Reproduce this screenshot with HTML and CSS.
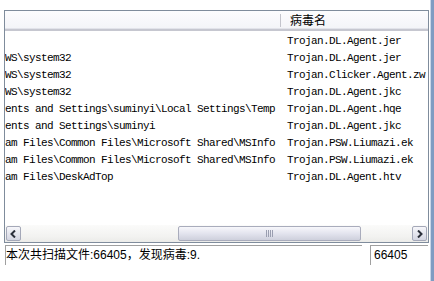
FILE: index.html
```html
<!DOCTYPE html>
<html lang="zh">
<head>
    <meta charset="UTF-8">
    <title>扫描结果</title>
    <link rel="stylesheet" href="styles.css">
</head>
<body>
    <div class="window">
        <div class="client">
            <div class="listview">
                <div class="header">
                    <div class="col-path"></div>
                    <div class="col-name">病毒名</div>
                </div>
                <div class="rows">
                    <div class="row"><span class="path"></span><span class="name">Trojan.DL.Agent.jer</span></div>
                    <div class="row"><span class="path">WS\system32</span><span class="name">Trojan.DL.Agent.jer</span></div>
                    <div class="row"><span class="path">WS\system32</span><span class="name">Trojan.Clicker.Agent.zw</span></div>
                    <div class="row"><span class="path">WS\system32</span><span class="name">Trojan.DL.Agent.jkc</span></div>
                    <div class="row"><span class="path">ents and Settings\suminyi\Local Settings\Temp</span><span class="name">Trojan.DL.Agent.hqe</span></div>
                    <div class="row"><span class="path">ents and Settings\suminyi</span><span class="name">Trojan.DL.Agent.jkc</span></div>
                    <div class="row"><span class="path">am Files\Common Files\Microsoft Shared\MSInfo</span><span class="name">Trojan.PSW.Liumazi.ek</span></div>
                    <div class="row"><span class="path">am Files\Common Files\Microsoft Shared\MSInfo</span><span class="name">Trojan.PSW.Liumazi.ek</span></div>
                    <div class="row"><span class="path">am Files\DeskAdTop</span><span class="name">Trojan.DL.Agent.htv</span></div>
                </div>
                <div class="hscroll">
                    <div class="sb-btn">
                        <svg width="7" height="8" viewBox="0 0 7 8"><path d="M5 0.5 L1.5 4 L5 7.5" fill="none" stroke="#2b2f3a" stroke-width="2"/></svg>
                    </div>
                    <div class="sb-track">
                        <div class="sb-thumb">
                            <span class="grip"></span><span class="grip"></span><span class="grip"></span><span class="grip"></span>
                        </div>
                    </div>
                    <div class="sb-btn">
                        <svg width="7" height="8" viewBox="0 0 7 8"><path d="M2 0.5 L5.5 4 L2 7.5" fill="none" stroke="#2b2f3a" stroke-width="2"/></svg>
                    </div>
                </div>
            </div>
            <div class="statusbar">
                <div class="panel panel-main">本次共扫描文件:66405，发现病毒:9.</div>
                <div class="panel panel-count">66405</div>
            </div>
        </div>
        <div class="frame"></div>
    </div>
</body>
</html>
```

FILE: styles.css
```css
body {
    margin: 0;
    background: #ffffff;
    font-family: "Liberation Sans", "Noto Sans CJK SC", sans-serif;
    font-size: 12px;
    color: #000;
}

.window {
    display: flex;
    width: 434px;
    height: 281px;
}

.client {
    width: 426px;
    padding: 10px 1px 0 4px;
    background: #ffffff;
}

.frame {
    width: 3px;
    background: #7f9cc2;
    border-left: 1px solid #c9d6e8;
}

.listview {
    height: 231px;
    border: 1px solid #7f8c9c;
    display: flex;
    flex-direction: column;
}

.header {
    height: 18px;
    display: flex;
    align-items: center;
    background: linear-gradient(#fcfcfe, #f3f4f8);
    border-bottom: 2px solid #c6c7d0;
    box-shadow: inset 0 -1px 0 #e2e3ea;
}

.col-path {
    width: 275px;
    height: 13px;
    border-right: 1px solid #c3c4cc;
}

.col-name {
    padding-left: 9px;
    font-family: "Noto Sans CJK SC", sans-serif;
    font-size: 12px;
    line-height: 14px;
}

.rows {
    flex: 1;
    padding-top: 2px;
    font-family: "Liberation Mono", "Noto Sans CJK SC", monospace;
    font-size: 11px;
    letter-spacing: -0.6px;
}

.row {
    display: flex;
    height: 17px;
    line-height: 17px;
    white-space: nowrap;
}

.path {
    width: 282px;
    overflow: hidden;
}

.name {
    flex: 1;
}

.hscroll {
    height: 17px;
    display: flex;
    background: linear-gradient(#fbfbfa, #f2f2f0 70%, #ebebe8);
}

.sb-btn {
    width: 15px;
    height: 15px;
    margin: 1px;
    border: 1px solid #a4a8b8;
    border-radius: 2px;
    background: linear-gradient(#f6f6fa, #d4d6e2);
    display: flex;
    align-items: center;
    justify-content: center;
    box-sizing: border-box;
}

.sb-track {
    flex: 1;
    display: flex;
    padding-left: 156px;
}

.sb-thumb {
    width: 183px;
    margin: 1px 0;
    box-sizing: border-box;
    border: 1px solid #a9acbc;
    border-radius: 2px;
    background: linear-gradient(#f7f7fb, #e3e4ee 50%, #ced0dc);
    display: flex;
    align-items: center;
    justify-content: center;
    gap: 1px;
}

.grip {
    width: 1px;
    height: 7px;
    background: #9a9eb0;
}

.statusbar {
    display: flex;
    gap: 8px;
    padding: 2px 0 0 1px;
}

.panel {
    height: 19px;
    line-height: 19px;
    border-top: 1px solid #a0a0a0;
    border-left: 1px solid #a0a0a0;
    white-space: nowrap;
}

.panel-main {
    width: 356px;
    font-family: "Liberation Sans", "Noto Sans CJK SC", sans-serif;
}

.panel-count {
    width: 54px;
    padding-left: 3px;
}
```
